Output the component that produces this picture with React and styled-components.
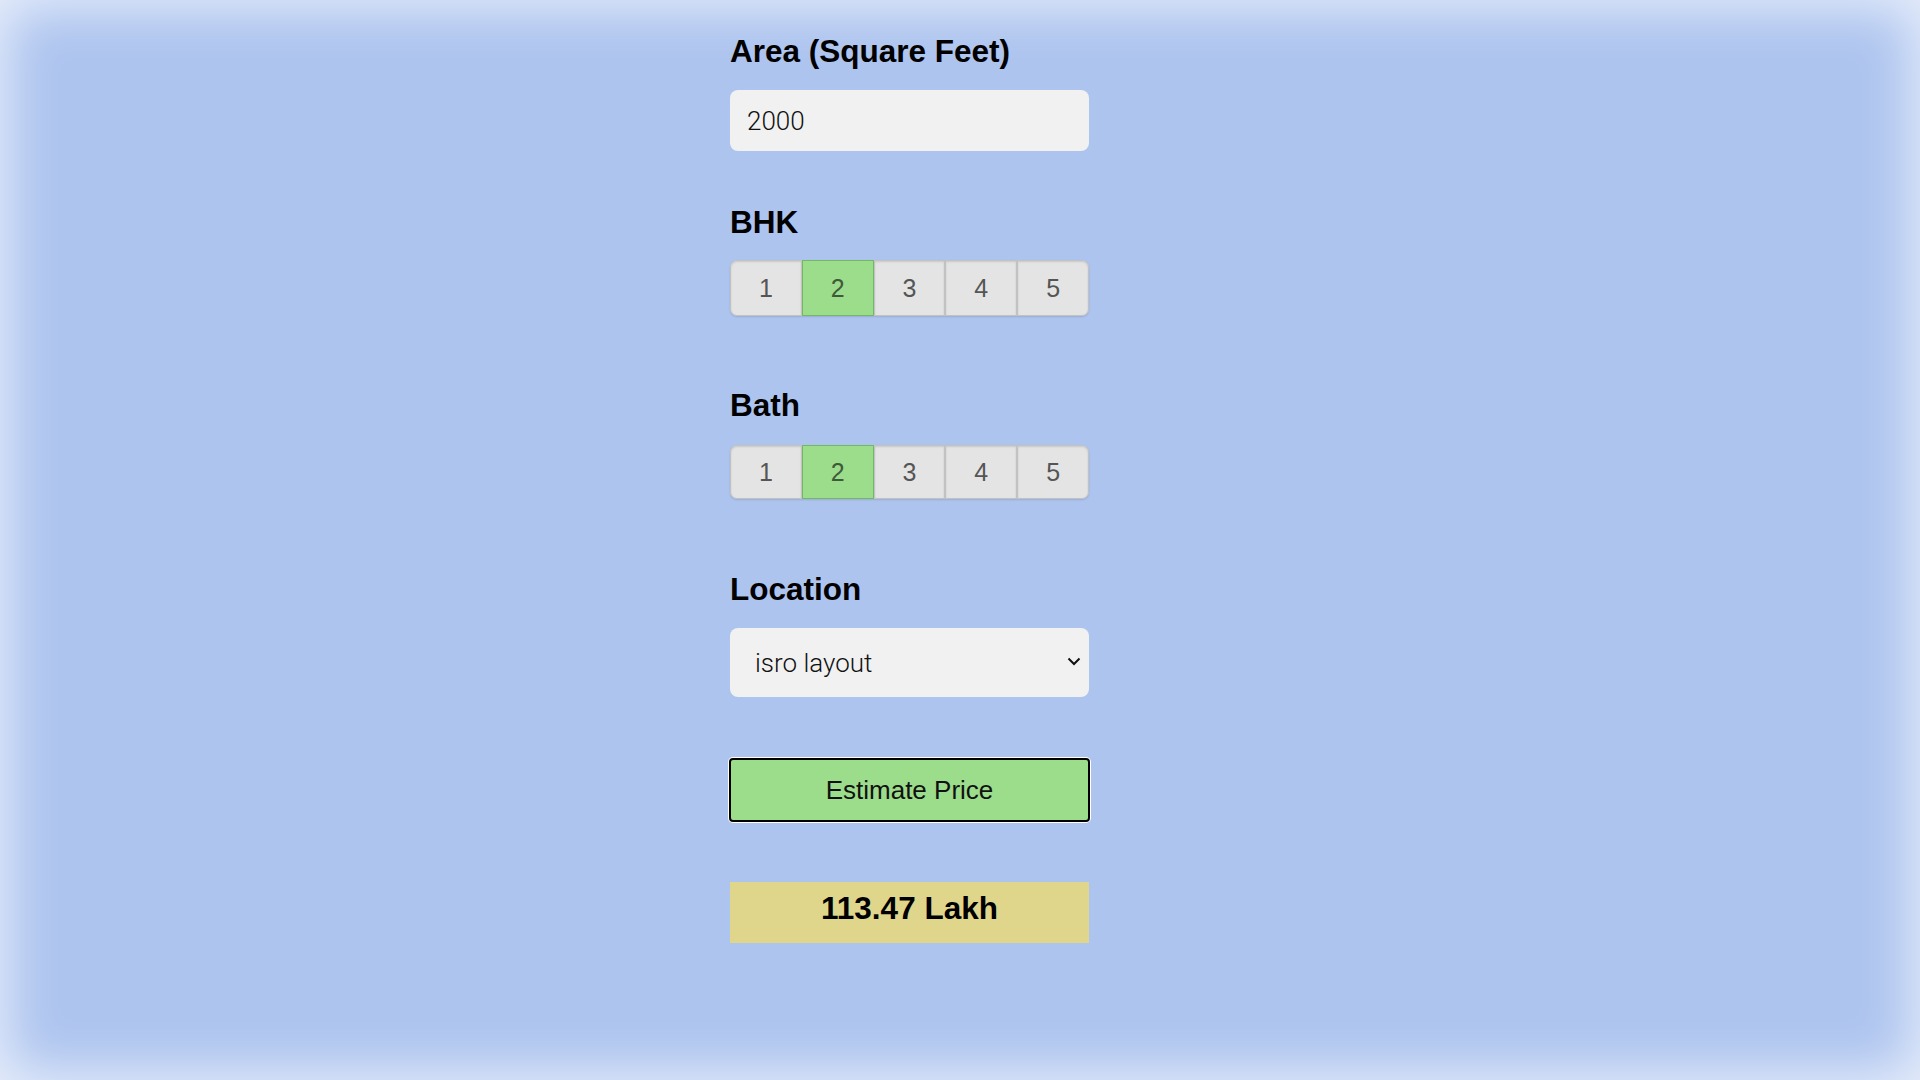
import React, { useState } from 'react';
import styled, { createGlobalStyle, css } from 'styled-components';

const GlobalStyle = createGlobalStyle`
  html {
    overflow-y: scroll;
  }
  body {
    margin: 0;
    padding-bottom: 26px;
    background: #adc4ef;
    font-family: "Liberation Sans", Arial, sans-serif;
  }
  ::-webkit-scrollbar {
    width: 15px;
    background: #f1f1f1;
  }
  ::-webkit-scrollbar-thumb {
    background: #c1c1c1;
    border: 2px solid #f1f1f1;
    border-width: 0 2px;
  }
  ::-webkit-scrollbar-button:single-button {
    height: 15px;
    background-color: #f1f1f1;
    background-repeat: no-repeat;
    background-position: center;
  }
  ::-webkit-scrollbar-button:single-button:vertical:decrement {
    background-image: linear-gradient(45deg, transparent 50%, transparent 50%);
    background-image: conic-gradient(from 150deg at 50% 40%, #a3a3a3 0 60deg, transparent 60deg);
    background-size: 8px 6px;
  }
  ::-webkit-scrollbar-button:single-button:vertical:increment {
    background-image: conic-gradient(from -30deg at 50% 60%, #505050 0 60deg, transparent 60deg);
    background-size: 8px 6px;
  }
`;

const Page = styled.div`
  height: 100vh;
  box-sizing: border-box;
  padding: 36px 0 0 730px;
  background: #adc4ef;
  box-shadow: inset 0 0 55px 6px rgba(255, 255, 255, 0.75);
`;

const Form = styled.form`
  width: 359px;
  display: flex;
  flex-direction: column;
`;

const Label = styled.h2`
  margin: ${(p) => p.top || 0}px 0 ${(p) => p.bottom || 23}px;
  font-size: 31.5px;
  line-height: 31px;
  font-weight: 700;
  color: #000;
`;

const fieldText = css`
  font-family: Roboto, "Liberation Sans", sans-serif;
  font-weight: 300;
  font-size: 26px;
  color: #111;
  background: #f1f1f1;
  border: none;
  border-radius: 8px;
  box-sizing: border-box;
  width: 100%;
  outline: none;
`;

const AreaInput = styled.input`
  ${fieldText}
  height: 61px;
  padding: 0 17px;
`;

const Segments = styled.div`
  display: flex;
  height: ${(p) => p.height}px;
  border-radius: 7px;
  box-shadow: 0 1px 2px rgba(0, 0, 0, 0.12);
`;

const Segment = styled.button`
  flex: 1;
  font-family: "Liberation Sans", Arial, sans-serif;
  font-size: 25px;
  color: #555;
  background: #e4e4e4;
  border: 1px solid #c2c2c2;
  box-shadow: inset 0 1px 2px rgba(0, 0, 0, 0.12);
  padding: 0;
  cursor: pointer;

  &:first-child {
    border-radius: 7px 0 0 7px;
  }
  &:last-child {
    border-radius: 0 7px 7px 0;
  }

  ${(p) =>
    p.active &&
    css`
      background: #9cdd8b;
      border-color: #74b866;
      color: #3f5a3a;
      box-shadow: none;
    `}
`;

const SelectWrap = styled.div`
  position: relative;
`;

const LocationSelect = styled.select`
  ${fieldText}
  appearance: none;
  height: 69px;
  padding: 0 40px 0 25px;
`;

const Chevron = styled.svg`
  position: absolute;
  right: 8px;
  top: 29px;
  width: 14px;
  height: 9px;
  pointer-events: none;
`;

const EstimateButton = styled.button`
  margin-top: 61px;
  height: 64px;
  width: 361px;
  margin-left: -1px;
  background: #9cdd8b;
  border: 2px solid #000;
  border-radius: 4px;
  box-shadow: 0 0 0 1px #fff;
  font-family: "Liberation Sans", Arial, sans-serif;
  font-size: 26px;
  color: #111;
  cursor: pointer;
`;

const Result = styled.div`
  margin-top: 60px;
  background: #dfd68c;
  padding: 11px 0 19px;
  text-align: center;
  font-size: 31.5px;
  line-height: 31px;
  font-weight: 700;
  color: #000;
`;

const options = [1, 2, 3, 4, 5];

function Picker({ value, onChange, height }) {
  return (
    <Segments height={height}>
      {options.map((n) => (
        <Segment
          key={n}
          type="button"
          active={n === value ? 1 : 0}
          onClick={() => onChange(n)}
        >
          {n}
        </Segment>
      ))}
    </Segments>
  );
}

export default function App() {
  const [area, setArea] = useState('2000');
  const [bhk, setBhk] = useState(2);
  const [bath, setBath] = useState(2);
  const [location, setLocation] = useState('isro layout');

  return (
    <>
      <GlobalStyle />
      <Page>
        <Form onSubmit={(e) => e.preventDefault()}>
          <Label>Area (Square Feet)</Label>
          <AreaInput value={area} onChange={(e) => setArea(e.target.value)} />

          <Label top={56} bottom={22}>BHK</Label>
          <Picker value={bhk} onChange={setBhk} height={56} />

          <Label top={74} bottom={24}>Bath</Label>
          <Picker value={bath} onChange={setBath} height={54} />

          <Label top={75}>Location</Label>
          <SelectWrap>
            <LocationSelect value={location} onChange={(e) => setLocation(e.target.value)}>
              <option>electronic city</option>
              <option>hebbal</option>
              <option>isro layout</option>
              <option>whitefield</option>
            </LocationSelect>
            <Chevron viewBox="0 0 14 9">
              <path d="M1.5 1.5 L7 7 L12.5 1.5" fill="none" stroke="#111" strokeWidth="2" />
            </Chevron>
          </SelectWrap>

          <EstimateButton type="submit">Estimate Price</EstimateButton>

          <Result>113.47 Lakh</Result>
        </Form>
      </Page>
    </>
  );
}
